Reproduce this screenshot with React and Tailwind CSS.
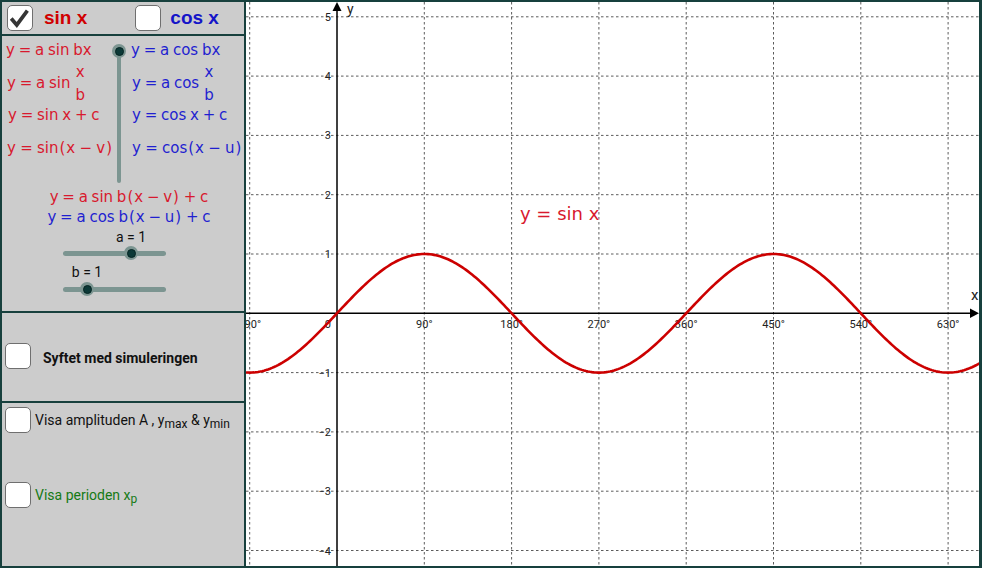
import React from "react";

const RED = "text-[#d8192e]";
const BLUE = "text-[#1f1fd0]";

function CheckBox({ checked }) {
  return (
    <div className="w-[26px] h-[26px] shrink-0 rounded-[5px] border-[1.5px] border-[#6f6f6f] bg-white flex items-center justify-center">
      {checked && (
        <svg width="26" height="26" viewBox="0 0 26 26">
          <polyline points="3.5,13.5 9.5,20.5 21,5" fill="none" stroke="#353535" strokeWidth="4" strokeLinejoin="miter" />
        </svg>
      )}
    </div>
  );
}

function Knob() {
  return (
    <div className="w-[14px] h-[14px] rounded-full bg-[#7c9591] flex items-center justify-center">
      <div className="w-[9px] h-[9px] rounded-full bg-[#0c3937] border border-[#052523]" />
    </div>
  );
}

function Frac({ top, bottom }) {
  return (
    <span className="inline-flex flex-col items-center gap-[3px] leading-[20px] ml-[5px]">
      <span>{top}</span>
      <span>{bottom}</span>
    </span>
  );
}

function P({ children }) {
  return <span className="mx-[1px]">{children}</span>;
}

function Graph() {
  const W = 734;
  const H = 564;
  const ox = 91;
  const oy = 311.3;
  const ux = 87.3;
  const uy = 59.3;
  const pts = [];
  for (let sx = 0; sx <= W; sx += 2) {
    const deg = ((sx - ox) / ux) * 90;
    const y = oy - uy * Math.sin((deg * Math.PI) / 180);
    pts.push(`${sx === 0 ? "M" : "L"}${sx.toFixed(1)},${y.toFixed(2)}`);
  }
  const vks = [-1, 1, 2, 3, 4, 5, 6, 7];
  const hjs = [5, 4, 3, 2, 1, -1, -2, -3, -4];
  return (
    <svg width={W} height={H} viewBox={`0 0 ${W} ${H}`} className="block">
      <rect x="0" y="0" width={W} height={H} fill="#ffffff" />
      {vks.map((k) => (
        <line key={"v" + k} x1={ox + k * ux} y1="0" x2={ox + k * ux} y2={H} stroke="#5c5c5c" strokeWidth="1" strokeDasharray="2.5 2.5" />
      ))}
      {hjs.map((j) => (
        <line key={"h" + j} x1="0" y1={oy - j * uy} x2={W} y2={oy - j * uy} stroke="#5c5c5c" strokeWidth="1" strokeDasharray="2.5 2.5" />
      ))}
      <line x1={ox} y1="8" x2={ox} y2={H} stroke="#000" strokeWidth="1.5" />
      <line x1="0" y1={oy} x2={W - 8} y2={oy} stroke="#000" strokeWidth="1.5" />
      <polygon points={`${ox},0 ${ox - 4.5},9 ${ox + 4.5},9`} fill="#000" />
      <polygon points={`${W - 1},${oy} ${W - 10},${oy - 4.8} ${W - 10},${oy + 4.8}`} fill="#000" />
      <g fontFamily="Roboto, 'Liberation Sans', sans-serif" fontSize="11" fill="#222">
        {vks.map((k) => (
          <text key={"xl" + k} x={ox + k * ux} y={oy + 15} textAnchor="middle">
            {k < 0 ? "−90°" : `${k * 90}°`}
          </text>
        ))}
        <text x={ox - 6} y={oy + 15} textAnchor="end">0</text>
        {hjs.map((j) => (
          <text key={"yl" + j} x={ox - 6} y={oy - j * uy + 4} textAnchor="end">
            {j < 0 ? `−${-j}` : `${j}`}
          </text>
        ))}
      </g>
      <text x={ox + 10} y="12" fontFamily="Roboto, 'Liberation Sans', sans-serif" fontSize="14" fill="#222">y</text>
      <text x={W - 9} y={oy - 13} fontFamily="Roboto, 'Liberation Sans', sans-serif" fontSize="15" fill="#222">x</text>
      <path d={pts.join(" ")} fill="none" stroke="#cc0000" strokeWidth="2.6" />
      <text x="274" y="218" fontFamily="'DejaVu Sans', sans-serif" fontSize="18" fill="#d8192e">
        y = sin x
      </text>
    </svg>
  );
}

export default function App() {
  const formula = "font-['DejaVu_Sans',sans-serif] text-[15px] leading-[20px] [word-spacing:-1px] whitespace-nowrap";
  const rows = ["h-[28px]", "h-[38px]", "h-[26px]", "h-[40px]"];
  return (
    <div className="w-[984px] h-[571px] bg-white">
      <div className="w-[982px] h-[568px] bg-[#17403d] border-t-2 border-l-2 border-b-2 border-r-[3px] border-[#17403d] flex gap-[2px]">
        {/* Left column */}
        <div className="w-[242px] flex flex-col gap-[2px]">
          {/* Top checkbox panel */}
          <div className="h-[32px] bg-[#cccccc] flex items-center pl-[5px]">
            <CheckBox checked />
            <span className="ml-[11px] font-['Liberation_Sans',Arial,sans-serif] font-bold text-[19px] text-[#d00000]">sin x</span>
            <div className="ml-[48px]">
              <CheckBox />
            </div>
            <span className="ml-[9px] font-['Liberation_Sans',Arial,sans-serif] font-bold text-[19px] text-[#1414c8]">cos x</span>
          </div>

          {/* Formulas + sliders panel */}
          <div className="h-[275px] bg-[#cccccc] flex flex-col">
            <div className="flex">
              <div className={`w-[110px] pl-[4px] flex flex-col ${formula} ${RED}`}>
                <div className={`${rows[0]} flex items-center`}>y = a sin bx</div>
                <div className={`${rows[1]} flex items-center pl-[1px]`}>
                  y = a sin<Frac top="x" bottom="b" />
                </div>
                <div className={`${rows[2]} flex items-center pl-[2px]`}>y = sin x + c</div>
                <div className={`${rows[3]} flex items-center pl-[1px] [word-spacing:-0.5px]`}>
                  y = sin<P>(</P>x − v<P>)</P>
                </div>
              </div>
              <div className="w-[14px] flex flex-col items-center pt-[8px]">
                <div className="relative z-10">
                  <Knob />
                </div>
                <div className="-mt-[7px] w-[4px] h-[132px] bg-[#7c9591] rounded-b-[2px]" />
              </div>
              <div className={`pl-[5px] flex flex-col ${formula} ${BLUE}`}>
                <div className={`${rows[0]} flex items-center`}>y = a cos bx</div>
                <div className={`${rows[1]} flex items-center pl-[1px]`}>
                  y = a cos<Frac top="x" bottom="b" />
                </div>
                <div className={`${rows[2]} flex items-center pl-[1px]`}>y = cos x + c</div>
                <div className={`${rows[3]} flex items-center pl-[1px] [word-spacing:-0.5px]`}>
                  y = cos<P>(</P>x − u<P>)</P>
                </div>
              </div>
            </div>

            <div className={`mt-[4px] pl-[12px] flex flex-col items-center ${formula}`}>
              <div className={RED}>
                y = a sin b<P>(</P>x − v<P>)</P> + c
              </div>
              <div className={BLUE}>
                y = a cos b<P>(</P>x − u<P>)</P> + c
              </div>
            </div>

            {/* slider a */}
            <div className="mt-[2px] ml-[61px] w-[103px]">
              <div className="w-[136px] text-center font-['Roboto',sans-serif] text-[14px] leading-[16px] text-[#111]">a = 1</div>
              <div className="relative mt-[1px] h-[14px] flex items-center">
                <div className="w-full h-[5px] rounded-full bg-[#7c9591]" />
                <div className="absolute left-[61px] top-0">
                  <Knob />
                </div>
              </div>
            </div>

            {/* slider b */}
            <div className="mt-[4px] ml-[61px] w-[103px]">
              <div className="w-[48px] text-center font-['Roboto',sans-serif] text-[14px] leading-[16px] text-[#111]">b = 1</div>
              <div className="relative mt-[2px] h-[14px] flex items-center">
                <div className="w-full h-[5px] rounded-full bg-[#7c9591]" />
                <div className="absolute left-[17px] top-0">
                  <Knob />
                </div>
              </div>
            </div>
          </div>

          {/* Syftet panel */}
          <div className="h-[88px] bg-[#cccccc] flex items-center pl-[3px] pt-[2px]">
            <div className="-mt-[4px]">
              <CheckBox />
            </div>
            <span className="ml-[12px] font-['Roboto',sans-serif] font-bold text-[14px] text-[#111]">Syftet med simuleringen</span>
          </div>

          {/* Visa panel */}
          <div className="flex-1 bg-[#cccccc] flex flex-col pl-[3px] pt-[4px]">
            <div className="flex items-center">
              <CheckBox />
              <span className="ml-[4px] font-['Roboto',sans-serif] text-[14px] text-[#111] whitespace-nowrap">
                Visa amplituden A , y<sub className="text-[12px]">max</sub> &amp; y<sub className="text-[12px]">min</sub>
              </span>
            </div>
            <div className="flex items-center mt-[49px]">
              <CheckBox />
              <span className="ml-[4px] font-['Roboto',sans-serif] text-[14px] text-[#157a15] whitespace-nowrap">
                Visa perioden x<sub className="text-[12px]">p</sub>
              </span>
            </div>
          </div>
        </div>

        {/* Graph */}
        <div className="flex-1 bg-white overflow-hidden">
          <Graph />
        </div>
      </div>
    </div>
  );
}
